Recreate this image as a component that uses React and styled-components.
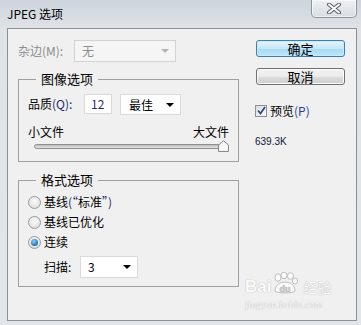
import React from 'react';
import styled, { createGlobalStyle } from 'styled-components';

const GlobalStyle = createGlobalStyle`
  html, body {
    margin: 0;
    padding: 0;
  }
  body {
    width: 361px;
    height: 325px;
    overflow: hidden;
    font-family: "Noto Sans CJK SC", "Liberation Sans", sans-serif;
    font-size: 12px;
    color: #000;
    background: #dfe3e8;
  }
`;

const Window = styled.div`
  position: relative;
  width: 361px;
  height: 325px;
  display: flex;
  flex-direction: column;
  background: linear-gradient(180deg, #cdd4dc 0px, #dfe3e8 28px, #e2e5e9 100%);
`;

const TitleBar = styled.div`
  height: 28px;
  display: flex;
  align-items: flex-start;
  flex-shrink: 0;
`;

const Title = styled.span`
  padding-left: 7px;
  line-height: 28px;
  font-size: 12px;
  color: #000;
`;

const CloseButton = styled.div`
  margin-left: auto;
  margin-right: 4px;
  width: 46px;
  height: 18px;
  box-sizing: border-box;
  border: 1px solid #8c939b;
  border-top: none;
  border-radius: 0 0 5px 5px;
  background: linear-gradient(180deg, #eef1f4, #d7dde3);
  box-shadow: inset 0 0 0 1px rgba(255, 255, 255, 0.6);
  display: flex;
  align-items: center;
  justify-content: center;
`;

const Frame = styled.div`
  flex: 1;
  display: flex;
  padding: 0 4px 4px 7px;
`;

const Client = styled.div`
  flex: 1;
  display: flex;
  align-items: flex-start;
  border: 1px solid #8b9096;
  background: #f0f0f0;
  padding: 11px 0 0 10px;
`;

const LeftCol = styled.div`
  width: 221px;
  display: flex;
  flex-direction: column;
`;

const RightCol = styled.div`
  width: 89px;
  margin-left: 17px;
  display: flex;
  flex-direction: column;
`;

const Row = styled.div`
  display: flex;
  align-items: ${({ $align }) => $align || 'center'};
  height: ${({ $h }) => $h}px;
  margin-top: ${({ $mt }) => $mt || 0}px;
  margin-left: ${({ $ml }) => $ml || 0}px;
`;

const Label = styled.span`
  width: ${({ $w }) => $w}px;
  flex-shrink: 0;
  line-height: 16px;
  color: ${({ $disabled }) => ($disabled ? '#8d8d8d' : '#000')};
`;

const Accent = styled.span`
  color: ${({ $c }) => $c || '#1d2a6e'};
`;

const Select = styled.div`
  width: ${({ $w }) => $w}px;
  height: ${({ $h }) => $h || 22}px;
  box-sizing: border-box;
  display: flex;
  align-items: center;
  padding: 0 6px 0 ${({ $pl }) => $pl || 7}px;
  border: 1px solid ${({ $disabled }) => ($disabled ? '#d3d3d3' : '#dadada')};
  background: ${({ $disabled }) => ($disabled ? '#f5f5f5' : '#fff')};
  color: ${({ $disabled }) => ($disabled ? '#8d8d8d' : '#000')};
  margin-left: ${({ $ml }) => $ml || 0}px;
`;

const SelectText = styled.span`
  flex: 1;
  line-height: 16px;
  color: inherit;
`;

const Arrow = styled.span`
  width: 0;
  height: 0;
  border-left: 4px solid transparent;
  border-right: 4px solid transparent;
  border-top: 4px solid ${({ $disabled }) => ($disabled ? '#b4b4b4' : '#000')};
`;

const TextInput = styled.div`
  width: 28px;
  height: 20px;
  box-sizing: border-box;
  border: 1px solid #d8d8d8;
  background: #fff;
  padding-left: 6px;
  line-height: 18px;
  color: #1d2a6e;
`;

const Group = styled.fieldset`
  width: 221px;
  box-sizing: border-box;
  margin: ${({ $mt }) => $mt}px 0 0;
  padding: ${({ $pt }) => $pt}px 9px ${({ $pb }) => $pb}px 9px;
  border: 1px solid #a0a0a0;
  min-width: 0;
`;

const Legend = styled.legend`
  padding: 0 5px;
  margin-left: 8px;
  line-height: 16px;
  font-size: 13px;
`;

const SizeLabels = styled.div`
  display: flex;
  justify-content: space-between;
  margin-top: 8px;
  line-height: 16px;
`;

const Slider = styled.div`
  position: relative;
  height: 12px;
  display: flex;
  align-items: center;
  padding: 0 2px 0 6px;
`;

const Track = styled.div`
  flex: 1;
  height: 5px;
  box-sizing: border-box;
  border: 1px solid #909090;
  border-radius: 3px;
  background: linear-gradient(180deg, #bdbdbd, #e6e6e6);
`;

const Thumb = styled.svg`
  position: absolute;
  right: 0;
  top: 0;
`;

const RadioRow = styled.label`
  display: flex;
  align-items: center;
  height: 20px;
  gap: 3px;
  line-height: 16px;
`;

const RadioDot = styled.span`
  width: 13px;
  height: 13px;
  box-sizing: border-box;
  border-radius: 50%;
  border: 1px solid #9a9a9a;
  background: radial-gradient(circle at 50% 40%, #fbfbfb 0%, #e6e6e6 60%, #d0d0d0 100%);
  display: flex;
  align-items: center;
  justify-content: center;
  &::after {
    content: '';
    display: ${({ $on }) => ($on ? 'block' : 'none')};
    width: 7px;
    height: 7px;
    border-radius: 50%;
    background: radial-gradient(circle at 40% 35%, #8fd0f5 0%, #2f86c8 55%, #10457d 100%);
  }
`;

const Button = styled.div`
  height: 17px;
  box-sizing: border-box;
  margin-top: ${({ $mt }) => $mt || 0}px;
  border: 1px solid ${({ $primary }) => ($primary ? '#3c7fb1' : '#707070')};
  border-radius: 3px;
  background: ${({ $primary }) => ($primary
    ? 'linear-gradient(180deg, #e9f6fd 0%, #c4e7f9 50%, #a8d9f4 51%, #bde5f8 100%)'
    : 'linear-gradient(180deg, #f3f3f3 0%, #ebebeb 50%, #dddddd 51%, #cfcfcf 100%)')};
  box-shadow: inset 0 0 0 1px ${({ $primary }) => ($primary ? '#c8ecfc' : '#fcfcfc')};
  display: flex;
  align-items: center;
  justify-content: center;
  line-height: 15px;
  font-size: 13px;
`;

const CheckRow = styled.div`
  display: flex;
  align-items: center;
  gap: 3px;
  margin: 19px 0 0 -1px;
  height: 13px;
  line-height: 16px;
`;

const CheckBox = styled.span`
  width: 12px;
  height: 12px;
  box-sizing: border-box;
  border: 1px solid #8e8f8f;
  background: linear-gradient(135deg, #dcdcdc, #fbfbfb);
  display: flex;
  align-items: center;
  justify-content: center;
`;

const FileSize = styled.div`
  margin: 18px 0 0 -1px;
  font-size: 10px;
  line-height: 14px;
  color: #101838;
  font-family: "Liberation Sans", "Noto Sans CJK SC", sans-serif;
`;

const Watermark = styled.div`
  position: absolute;
  left: 245px;
  top: 270px;
  width: 90px;
  display: flex;
  flex-direction: column;
  align-items: flex-start;
  color: #fbfbfb;
  text-shadow: 0 0 1px #b9b9b9, 0 0 1px #c4c4c4;
  pointer-events: none;
`;

const MarkTop = styled.div`
  display: flex;
  align-items: flex-end;
  height: 24px;
`;

const MarkWord = styled.span`
  font-family: "Liberation Sans", sans-serif;
  font-weight: bold;
  font-size: ${({ $size }) => $size || 15}px;
  line-height: 14px;
`;

const MarkCjk = styled.span`
  font-size: 14px;
  line-height: 14px;
  margin-left: 4px;
`;

const MarkUrl = styled.span`
  margin-top: 6px;
  font-family: "Liberation Serif", serif;
  font-size: 10px;
  line-height: 10px;
  letter-spacing: 0.2px;
`;

const CloseGlyph = () => (
  <svg width="16" height="11" viewBox="0 0 16 11">
    <path d="M3 1.5 L13 9.5 M13 1.5 L3 9.5" stroke="#5b6068" strokeWidth="4" strokeLinecap="round" />
    <path d="M3 1.5 L13 9.5 M13 1.5 L3 9.5" stroke="#ffffff" strokeWidth="2" strokeLinecap="round" />
  </svg>
);

const Paw = () => (
  <svg width="28" height="22" viewBox="0 0 28 22">
    <g fill="#fbfbfb" stroke="#bdbdbd" strokeWidth="1">
      <ellipse cx="7" cy="5.5" rx="3" ry="3.8" />
      <ellipse cx="13" cy="3.5" rx="3" ry="3.2" />
      <ellipse cx="19.5" cy="4" rx="3" ry="3.4" />
      <ellipse cx="24" cy="9" rx="2.6" ry="3" />
      <path d="M4 19 C4 13 9 10 14 10 C19 10 24 13 24 19 C24 21.5 4 21.5 4 19 Z" />
    </g>
    <text x="14" y="19.5" textAnchor="middle" fontSize="9" fontWeight="bold" fill="#c8c8c8" fontFamily="Liberation Sans, sans-serif">du</text>
  </svg>
);

const App = () => (
  <>
    <GlobalStyle />
    <Window>
      <TitleBar>
        <Title>JPEG 选项</Title>
        <CloseButton>
          <CloseGlyph />
        </CloseButton>
      </TitleBar>
      <Frame>
        <Client>
          <LeftCol>
            <Row $h={22}>
              <Label $w={56} $disabled>杂边(M):</Label>
              <Select $w={102} $disabled>
                <SelectText>无</SelectText>
                <Arrow $disabled />
              </Select>
            </Row>

            <Group $mt={9} $pt={7} $pb={9}>
              <Legend>图像选项</Legend>
              <Row $h={22} $align="flex-start">
                <Label $w={56} style={{ marginTop: 2 }}>
                  品质
                  <Accent>(Q):</Accent>
                </Label>
                <TextInput>12</TextInput>
                <Select $w={61} $h={21} $ml={8} $pl={8}>
                  <SelectText>最佳</SelectText>
                  <Arrow />
                </Select>
              </Row>
              <SizeLabels>
                <span>小文件</span>
                <span>大文件</span>
              </SizeLabels>
              <Slider>
                <Track />
                <Thumb width="11" height="12" viewBox="0 0 11 12">
                  <path d="M0.5 11.5 V5 L5.5 0.8 L10.5 5 V11.5 Z" fill="#ececec" stroke="#8a8a8a" />
                  <path d="M1.5 10.5 V5.5 L5.5 2.2 L9.5 5.5 V10.5 Z" fill="#f7f7f7" />
                </Thumb>
              </Slider>
            </Group>

            <Group $mt={10} $pt={4} $pb={8}>
              <Legend>格式选项</Legend>
              <RadioRow>
                <RadioDot />
                <span>
                  基线
                  <Accent>(“</Accent>
                  标准
                  <Accent>”)</Accent>
                </span>
              </RadioRow>
              <RadioRow>
                <RadioDot />
                <span>基线已优化</span>
              </RadioRow>
              <RadioRow>
                <RadioDot $on />
                <span>连续</span>
              </RadioRow>
              <Row $h={22} $mt={4} $ml={16}>
                <Label $w={36}>扫描:</Label>
                <Select $w={58}>
                  <SelectText>3</SelectText>
                  <Arrow />
                </Select>
              </Row>
            </Group>
          </LeftCol>

          <RightCol>
            <Button $primary>确定</Button>
            <Button $mt={11}>取消</Button>
            <CheckRow>
              <CheckBox>
                <svg width="9" height="9" viewBox="0 0 9 9">
                  <path d="M1 4.5 L3.5 7.5 L8 1" fill="none" stroke="#2a4e8f" strokeWidth="1.8" />
                </svg>
              </CheckBox>
              <span>
                预览
                <Accent $c="#2540a0">(P)</Accent>
              </span>
            </CheckRow>
            <FileSize>639.3K</FileSize>
          </RightCol>
        </Client>
      </Frame>

      <Watermark>
        <MarkTop>
          <MarkWord $size={17}>Bai</MarkWord>
          <Paw />
          <MarkCjk>经验</MarkCjk>
        </MarkTop>
        <MarkUrl>jingyan.baidu.com</MarkUrl>
      </Watermark>
    </Window>
  </>
);

export default App;
